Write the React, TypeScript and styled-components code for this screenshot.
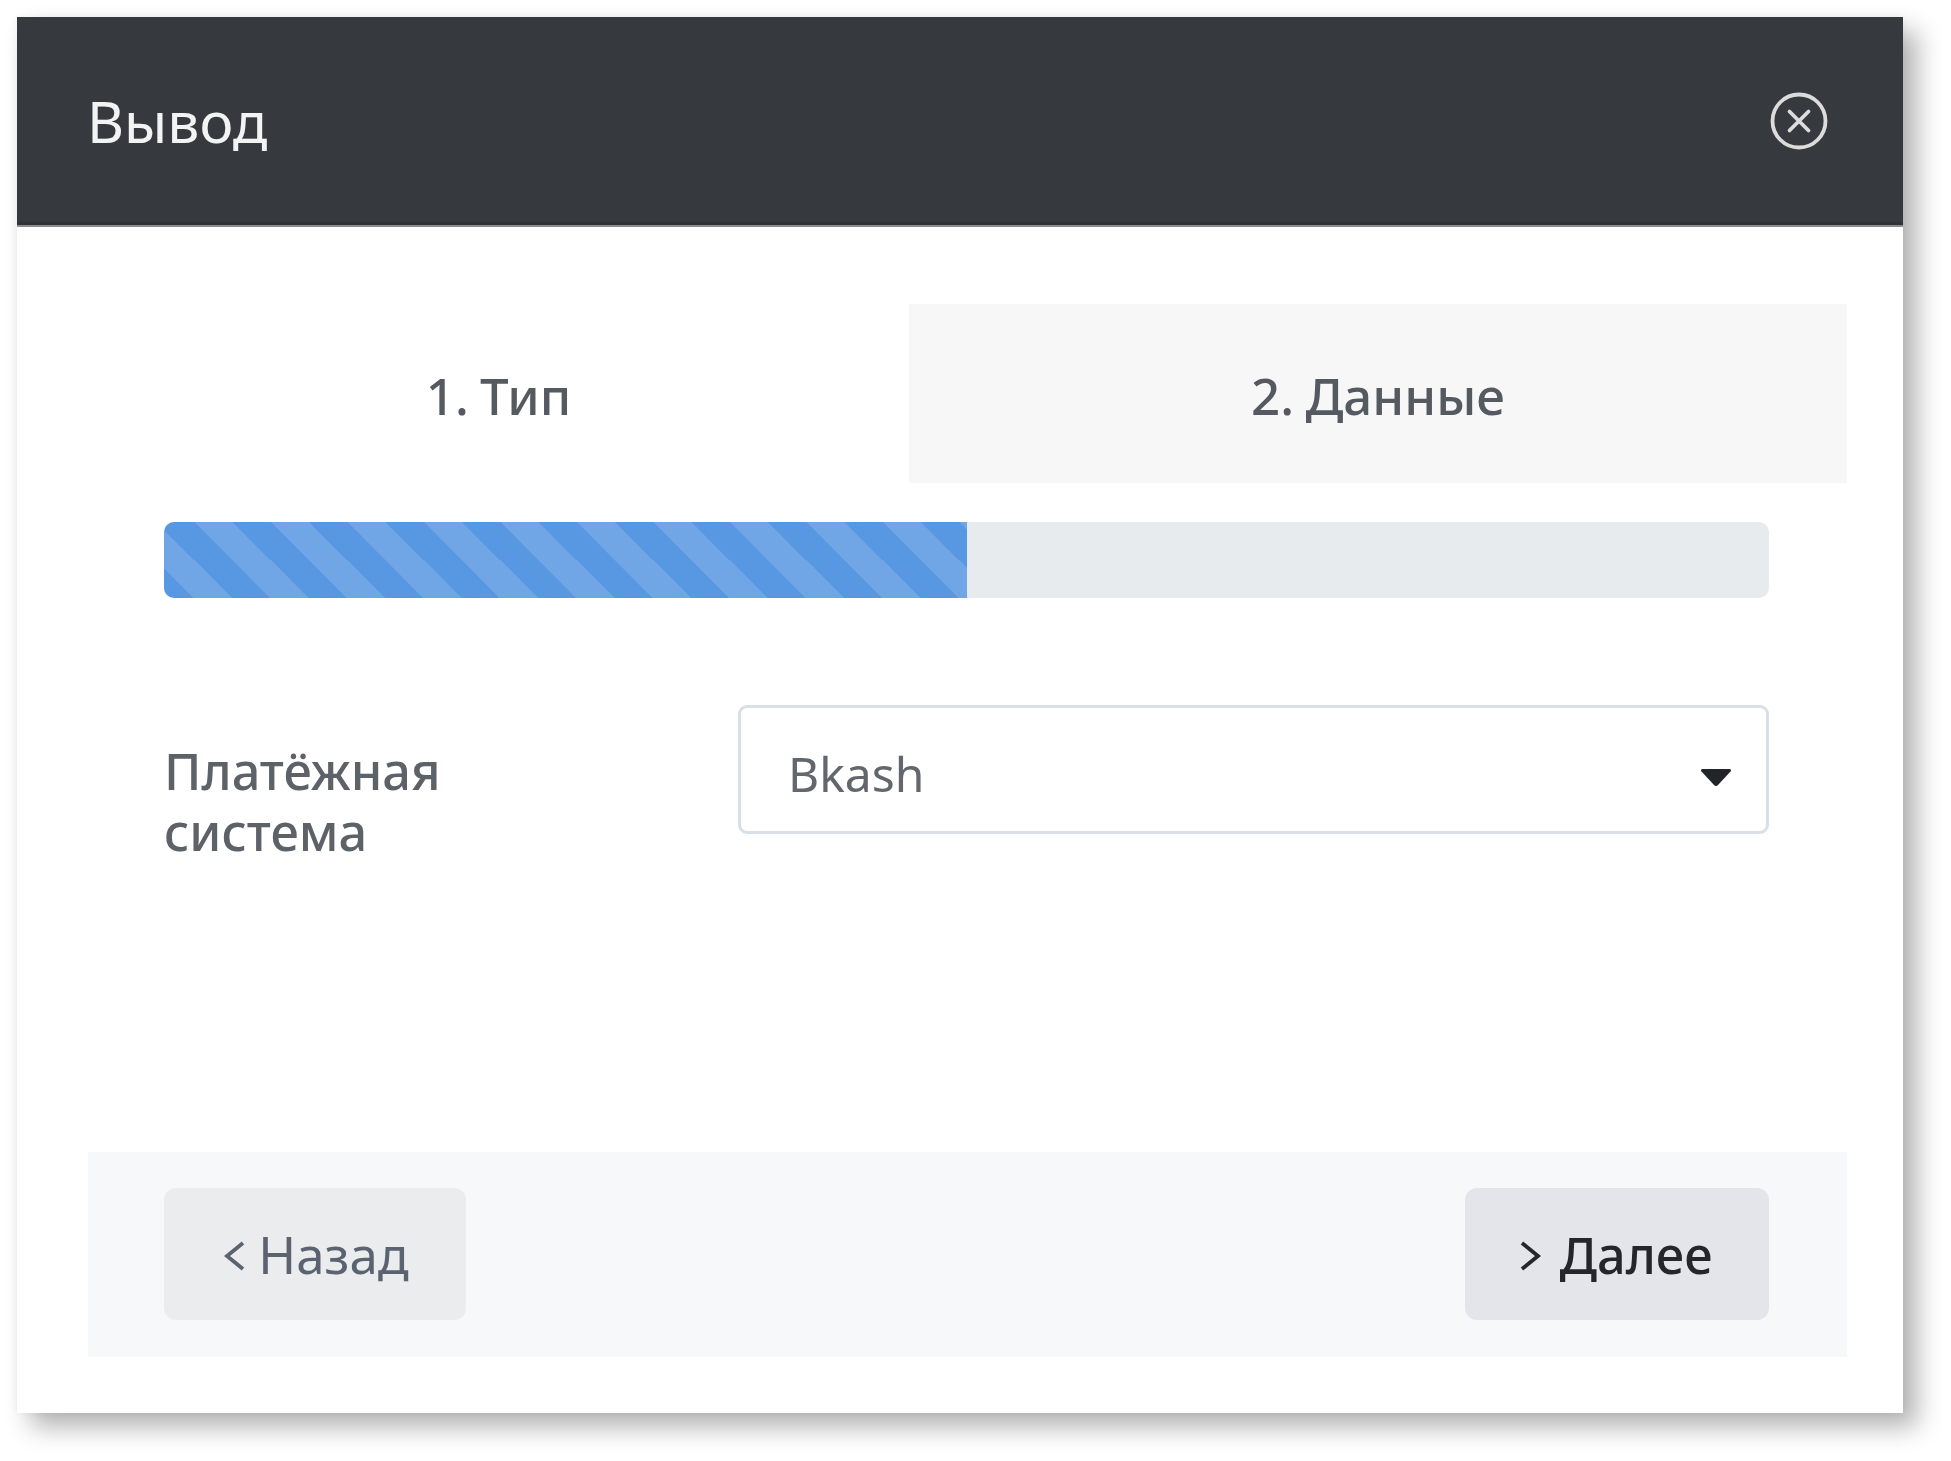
import React from "react";
import styled, { createGlobalStyle } from "styled-components";

const Global = createGlobalStyle`
  html, body { margin: 0; padding: 0; background: #fff; }
  body { font-family: "Noto Sans", "Open Sans", sans-serif; }
`;

const Page = styled.div`
  width: 1951px;
  height: 1461px;
  padding: 17px 0 0 17px;
  box-sizing: border-box;
  overflow: hidden;
`;

const Modal = styled.section`
  width: 1886px;
  height: 1396px;
  background: #fff;
  display: flex;
  flex-direction: column;
  box-shadow: 14px 14px 24px rgba(0, 0, 0, 0.3), 0 0 8px rgba(0, 0, 0, 0.05);
`;

const Header = styled.header`
  height: 210px;
  box-sizing: border-box;
  background: #363a3f;
  border-bottom: 2px solid #8a8d90;
  box-shadow: inset 0 -3px 0 #2f3337;
  padding: 0 75px 0 70px;
  display: flex;
  align-items: center;
  justify-content: space-between;
`;

const Title = styled.h1`
  margin: 0;
  font-size: 57px;
  line-height: 1;
  font-weight: 400;
  color: #f2f3f3;
  filter: blur(0.7px);
`;

const CloseIcon = styled.svg`
  display: block;
  width: 58px;
  height: 58px;
  fill: none;
  stroke: #dcdcdc;
  stroke-width: 3.8;
  stroke-linecap: round;
  filter: blur(0.7px);
`;

const Body = styled.div`
  flex: 1;
  display: flex;
  flex-direction: column;
  padding: 77px 56px 56px 71px;
`;

const Tabs = styled.div`
  display: grid;
  grid-template-columns: 821fr 938fr;
  height: 179px;
`;

const Tab = styled.div<{ $active?: boolean }>`
  display: flex;
  align-items: center;
  justify-content: center;
  padding-top: 2px;
  background: ${(p) => (p.$active ? "#fff" : "#f7f7f8")};
  color: #555a60;
  font-size: 51px;
  font-weight: 500;
  word-spacing: -2px;
`;

const TabLabel = styled.span`
  filter: blur(0.7px);
`;

const Progress = styled.div`
  margin: 39px 78px 0 76px;
  height: 76px;
  border-radius: 10px;
  overflow: hidden;
  background: #e8ebee;
`;

const ProgressFill = styled.div`
  height: 100%;
  background-color: #5897e2;
  background-image: linear-gradient(
    45deg,
    rgba(255, 255, 255, 0.14) 25%,
    transparent 25%,
    transparent 50%,
    rgba(255, 255, 255, 0.14) 50%,
    rgba(255, 255, 255, 0.14) 75%,
    transparent 75%,
    transparent
  );
  background-size: 76.5px 76px;
  background-position: 30px 0;
`;

const FormRow = styled.div`
  margin: 107px 78px 0 76px;
  display: grid;
  grid-template-columns: 574px 1fr;
`;

const Label = styled.label`
  padding-top: 35px;
  font-size: 50.5px;
  font-weight: 500;
  line-height: 61px;
  color: #5d6268;
  filter: blur(0.7px);
`;

const Select = styled.div`
  height: 129px;
  box-sizing: border-box;
  border: 3px solid #d8dfe7;
  border-radius: 9px;
  padding: 8px 34px 0 47px;
  display: flex;
  align-items: center;
  justify-content: space-between;
  color: #62676d;
  font-size: 48px;
`;

const SelectValue = styled.span`
  filter: blur(0.7px);
`;

const Caret = styled.svg`
  display: block;
  width: 32px;
  height: 20px;
  margin-top: 8px;
  fill: #212529;
  filter: blur(0.6px);
`;

const Footer = styled.footer`
  margin-top: auto;
  height: 205px;
  box-sizing: border-box;
  background: #f7f8fa;
  padding: 36px 78px 37px 76px;
  display: flex;
  justify-content: space-between;
`;

const Button = styled.button<{ $primary?: boolean }>`
  width: ${(p) => (p.$primary ? 304 : 302)}px;
  border: 0;
  border-radius: 12px;
  padding: ${(p) => (p.$primary ? "0 3px 0 0" : "0 0 0 2px")};
  display: flex;
  align-items: center;
  justify-content: center;
  gap: ${(p) => (p.$primary ? 17 : 11)}px;
  font-family: inherit;
  font-size: ${(p) => (p.$primary ? 50.5 : 51)}px;
  font-weight: ${(p) => (p.$primary ? 500 : 400)};
  background: ${(p) => (p.$primary ? "#e3e5ea" : "#ebecee")};
  color: ${(p) => (p.$primary ? "#23272c" : "#5c6370")};
`;

const ButtonText = styled.span`
  filter: blur(0.6px);
`;

const Chevron = styled.svg`
  display: block;
  width: 24px;
  height: 40px;
  margin-top: 4px;
  fill: none;
  stroke: currentColor;
  stroke-width: 3.8;
  filter: blur(0.6px);
`;

export default function App() {
  return (
    <Page>
      <Global />
      <Modal>
        <Header>
          <Title>Вывод</Title>
          <CloseIcon viewBox="0 0 58 58">
            <circle cx="29" cy="29" r="26.5" />
            <path d="M19.500 19.500 38.500 38.500M38.500 19.500 19.500 38.500" />
          </CloseIcon>
        </Header>
        <Body>
          <Tabs>
            <Tab $active>
              <TabLabel>1. Тип</TabLabel>
            </Tab>
            <Tab>
              <TabLabel>2. Данные</TabLabel>
            </Tab>
          </Tabs>
          <Progress>
            <ProgressFill style={{ width: "50%" }} />
          </Progress>
          <FormRow>
            <Label>
              Платёжная
              <br />
              система
            </Label>
            <Select>
              <SelectValue>Bkash</SelectValue>
              <Caret viewBox="0 0 32 20">
                <path d="M3 1h26q3 0 1.500 2.500L18 17q-2 2-4 0L1.500 3.500Q0 1 3 1z" />
              </Caret>
            </Select>
          </FormRow>
          <Footer>
            <Button>
              <Chevron viewBox="0 0 24 40">
                <path d="M20 7 4 20l16 13" />
              </Chevron>
              <ButtonText>Назад</ButtonText>
            </Button>
            <Button $primary>
              <Chevron viewBox="0 0 24 40">
                <path d="m4 7 16 13L4 33" />
              </Chevron>
              <ButtonText>Далее</ButtonText>
            </Button>
          </Footer>
        </Body>
      </Modal>
    </Page>
  );
}
